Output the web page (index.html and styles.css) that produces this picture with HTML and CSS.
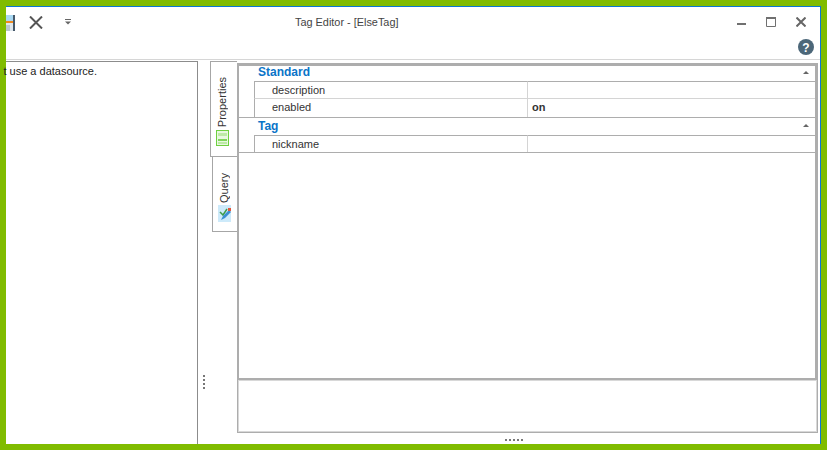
FILE: index.html
```html
<!DOCTYPE html>
<html lang="en">
<head>
<meta charset="utf-8">
<title>Tag Editor - [ElseTag]</title>
<link rel="stylesheet" href="styles.css">
</head>
<body>
<div class="window">
  <header class="head">
    <div class="toolbar">
      <svg class="save" width="9" height="16" viewBox="0 0 9 16"><rect x="0" y="0" width="9" height="16" fill="#46586a"/><rect x="0" y="0" width="7" height="6" fill="#a9d8f2"/><rect x="0" y="6" width="7" height="2" fill="#f08a1d"/><rect x="0" y="8" width="7" height="8" fill="#dfe7ec"/><rect x="0" y="10" width="4" height="6" fill="#b9c6cf"/></svg>
      <svg class="cancel" width="14" height="13" viewBox="0 0 14 13"><path d="M1 0.5 13 12.5M13 0.5 1 12.5" stroke="#555" stroke-width="2" fill="none"/></svg>
      <svg class="drop" width="6" height="6" viewBox="0 0 6 6"><rect x="0" y="0" width="6" height="1" fill="#666"/><path d="M0 2.500H6L3 5.500Z" fill="#666"/></svg>
      <span class="title">Tag Editor - [ElseTag]</span>
      <svg class="ctl ctl-min" width="9" height="2" viewBox="0 0 9 2"><rect width="9" height="2" fill="#707070"/></svg>
      <svg class="ctl ctl-max" width="10" height="10" viewBox="0 0 10 10"><path d="M.5 .5H9.500V9.500H.5Z" fill="none" stroke="#707070"/><rect width="10" height="2" fill="#707070"/></svg>
      <svg class="ctl ctl-close" width="10" height="10" viewBox="0 0 10 10"><path d="M.5 .5 9.500 9.500M9.500 .5 .5 9.500" stroke="#666" stroke-width="2" fill="none"/></svg>
    </div>
    <div class="helpbar">
      <svg width="16" height="16" viewBox="0 0 16 16"><circle cx="8" cy="8" r="8" fill="#4c6779"/><text x="8" y="12.500" text-anchor="middle" class="helpmark">?</text></svg>
    </div>
  </header>
  <main class="main">
    <section class="source"><p>t use a datasource.</p></section>
    <div class="vsplit"><i></i><i></i><i></i><i></i></div>
    <nav class="tabs">
      <div class="tab tab-active">
        <svg width="13" height="16" viewBox="0 0 13 16"><rect x=".5" y=".5" width="12" height="15" fill="#e8f8e0" stroke="#6fd040"/><rect x="2" y="3" width="9" height="3" fill="#bdeaa6"/><rect x="2" y="9" width="9" height="2" fill="#7fd65a"/><rect x="2" y="12" width="9" height="2" fill="#bdeaa6"/></svg>
        <span class="tab-label">Properties</span>
      </div>
      <div class="tab tab-query">
        <svg width="14" height="17" viewBox="0 0 14 17"><rect width="13" height="17" fill="#cdeafa"/><path d="M2 7 5 10 9 4" stroke="#3b9c4a" stroke-width="1.500" fill="none"/><path d="M3 15 5 11 11 5 13 7 7 13Z" fill="#3a8fd0"/><rect x="10" y="3" width="3" height="3" fill="#e2563c"/></svg>
        <span class="tab-label">Query</span>
      </div>
    </nav>
    <div class="content">
      <div class="grid">
        <div class="group">Standard<b class="caret"></b></div>
        <div class="row row-line"><span class="key">description</span><span class="val"></span></div>
        <div class="row row-last row-tall"><span class="key">enabled</span><span class="val val-on">on</span></div>
        <div class="group group-tag">Tag<b class="caret"></b></div>
        <div class="row row-line row-last"><span class="key">nickname</span><span class="val"></span></div>
      </div>
      <div class="desc"></div>
      <div class="hsplit"><i></i><i></i><i></i><i></i><i></i></div>
    </div>
  </main>
</div>
</body>
</html>
```
FILE: styles.css
```css
* { box-sizing: border-box; }
html, body { margin: 0; height: 100%; }
body {
  background: #80bc00;
  padding: 6px;
  font-family: "Liberation Sans", Arial, sans-serif;
  font-size: 11px;
  color: #222;
  overflow: hidden;
}
.window {
  height: 438px;
  background: #fff;
  border-top: 1px solid #0a78d2;
  border-right: 1px solid #0a78d2;
  display: flex;
  flex-direction: column;
}
.head {
  height: 53px;
  border-bottom: 1px solid #d6d6d6;
  flex: none;
}
.toolbar {
  display: flex;
  align-items: flex-start;
  height: 32px;
}
.save { margin-top: 8px; flex: none; }
.cancel { margin: 9px 0 0 14px; flex: none; }
.drop { margin: 12px 0 0 22px; flex: none; }
.title {
  margin: 7px 0 0 224px;
  width: 106px;
  white-space: nowrap;
  color: #444;
  line-height: 16px;
  font-size: 10.900px;
}
.ctl { flex: none; }
.ctl-min { margin: 16px 0 0 336px; }
.ctl-max { margin: 10px 0 0 20px; }
.ctl-close { margin: 10px 0 0 20px; }
.helpbar {
  display: flex;
  justify-content: flex-end;
  padding-right: 6px;
}
.helpmark {
  font-weight: 700;
  font-size: 12px;
  fill: #fff;
}
.main {
  flex: 1;
  display: flex;
  min-height: 0;
  padding-top: 1px;
}
.source {
  width: 192px;
  flex: none;
  border-top: 1px solid #8c8c8c;
  border-right: 1px solid #8c8c8c;
  display: flex;
  justify-content: flex-end;
  align-items: flex-start;
  padding-right: 100px;
}
.source p {
  margin: 1px 0 0;
  white-space: nowrap;
  flex: none;
  line-height: 16px;
}
.vsplit {
  width: 12px;
  flex: none;
  display: flex;
  flex-direction: column;
  align-items: center;
  justify-content: flex-end;
  gap: 2px;
  padding-bottom: 55px;
  padding-right: 1px;
}
.vsplit i, .hsplit i {
  display: block;
  width: 2px;
  height: 2px;
  background: #777;
}
.tabs {
  width: 27px;
  flex: none;
  display: flex;
  flex-direction: column;
  align-items: flex-end;
}
.tab {
  display: flex;
  flex-direction: column-reverse;
  align-items: center;
  border: 1px solid #a6a6a6;
  border-right: 0;
  background: #fff;
  color: #333;
}
.tab-active {
  width: 27px;
  height: 96px;
  padding: 0 4px 10px 0;
  gap: 3px;
}
.tab-query {
  width: 25px;
  height: 75px;
  border-top: 0;
  padding: 0 0 9px 0;
  gap: 2px;
}
.tab-query .tab-label { margin-right: 3px; }
.tab-label {
  writing-mode: vertical-rl;
  transform: rotate(180deg);
  line-height: 12px;
  white-space: nowrap;
}
.content {
  width: 581px;
  flex: none;
  display: flex;
  flex-direction: column;
  padding-top: 2px;
}
.grid {
  height: 316px;
  flex: none;
  border: 2px solid #adadad;
  border-top-width: 3px;
  border-right-width: 3px;
  border-bottom-width: 1px;
}
.group {
  height: 15px;
  padding: 0 6px 0 19px;
  font-weight: 700;
  font-size: 12px;
  line-height: 13px;
  color: #0a74c8;
  display: flex;
  justify-content: space-between;
  align-items: flex-start;
}
.group-tag {
  height: 17px;
  padding-top: 2px;
}
.caret {
  width: 0;
  height: 0;
  margin-top: 5px;
  border-left: 3px solid transparent;
  border-right: 3px solid transparent;
  border-bottom: 3px solid #666;
}
.group-tag .caret { margin-top: 4px; }
.row {
  height: 17px;
  display: grid;
  grid-template-columns: 15px 273px 1fr;
  line-height: 16px;
  color: #333;
}
.row::before {
  content: "";
  grid-row: 1;
}
.row .key, .row .val { border-top: 1px solid #adadad; margin-top: -1px; height: 17px; }
.group + .row { margin-top: 1px; }
.row + .row .key, .row + .row .val { border-top-color: #d4d4d4; }
.row-tall { height: 19px; }
.row-tall .key, .row-tall .val { height: 19px; line-height: 17px; }
.row-last { border-bottom: 1px solid #adadad; }
.key { border-left: 1px solid #adadad; padding-left: 17px; }
.val { border-left: 1px solid #d4d4d4; padding-left: 4px; }
.val-on { font-weight: 700; }
.desc {
  height: 54px;
  flex: none;
  border: 1px solid #adadad;
  box-shadow: inset 1px 1px 0 #d8d8d8, inset -1px -1px 0 #d8d8d8;
}
.hsplit {
  flex: 1;
  display: flex;
  justify-content: center;
  gap: 2px;
  padding-top: 6px;
  padding-right: 27px;
}
```
